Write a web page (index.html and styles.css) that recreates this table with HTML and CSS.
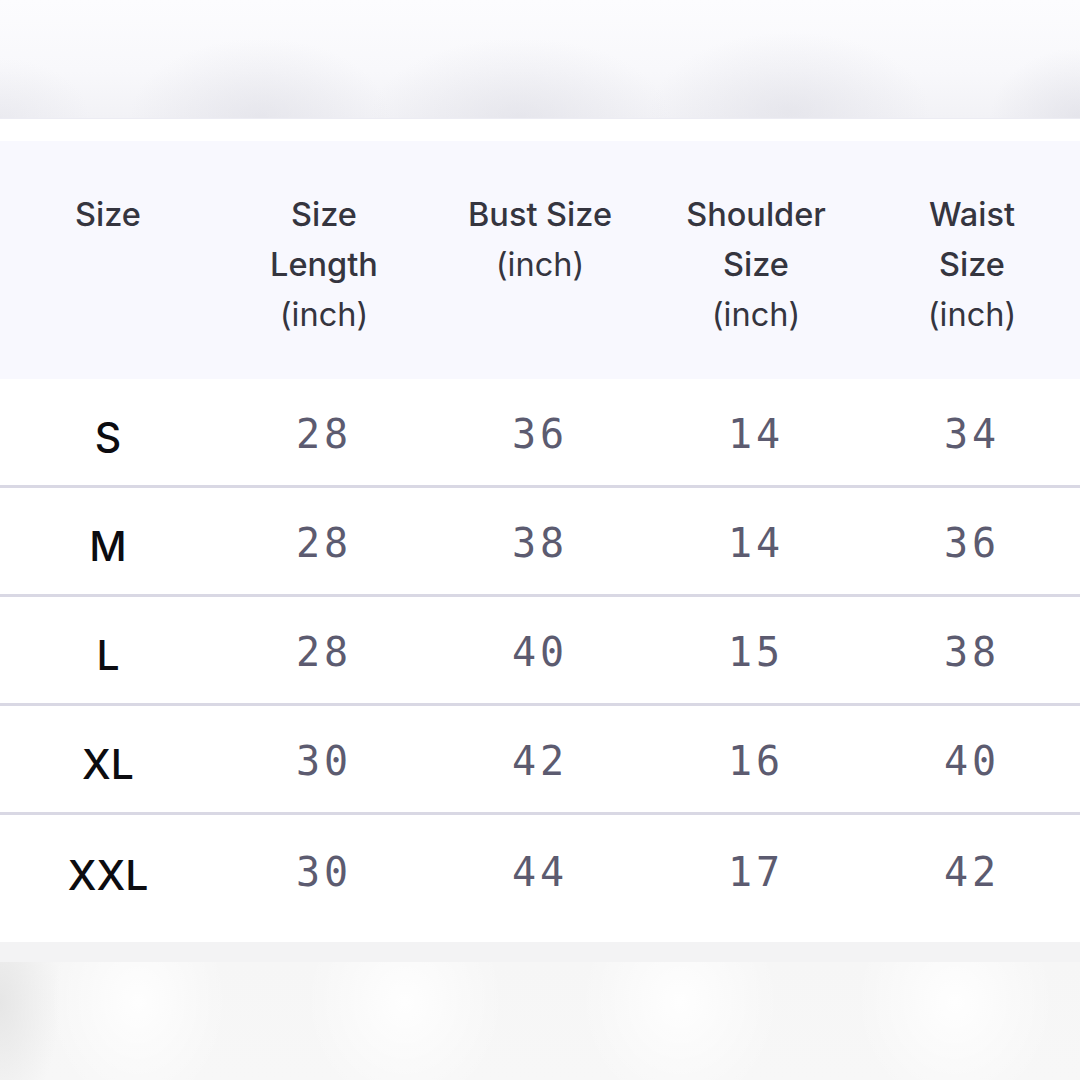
FILE: index.html
```html
<!DOCTYPE html>
<html>
<head>
<meta charset="utf-8">
<link rel="stylesheet" href="styles.css">
</head>
<body>
<div class="page">
  <div class="top-blur"></div>
  <div class="spacer"></div>
  <div class="chart">
    <div class="row head">
      <div class="cell">Size</div>
      <div class="cell">Size<br>Length<br><span class="unit">(inch)</span></div>
      <div class="cell">Bust Size<br><span class="unit">(inch)</span></div>
      <div class="cell">Shoulder<br>Size<br><span class="unit">(inch)</span></div>
      <div class="cell">Waist<br>Size<br><span class="unit">(inch)</span></div>
    </div>
    <div class="row body">
      <div class="cell size">S</div><div class="cell num">28</div><div class="cell num">36</div><div class="cell num">14</div><div class="cell num">34</div>
    </div>
    <div class="row body">
      <div class="cell size">M</div><div class="cell num">28</div><div class="cell num">38</div><div class="cell num">14</div><div class="cell num">36</div>
    </div>
    <div class="row body">
      <div class="cell size">L</div><div class="cell num">28</div><div class="cell num">40</div><div class="cell num">15</div><div class="cell num">38</div>
    </div>
    <div class="row body">
      <div class="cell size">XL</div><div class="cell num">30</div><div class="cell num">42</div><div class="cell num">16</div><div class="cell num">40</div>
    </div>
    <div class="row body last">
      <div class="cell size">XXL</div><div class="cell num">30</div><div class="cell num">44</div><div class="cell num">17</div><div class="cell num">42</div>
    </div>
  </div>
  <div class="band"></div>
  <div class="bottom-blur"></div>
</div>
</body>
</html>
```

FILE: styles.css
```css
html, body {
  margin: 0;
  padding: 0;
  background: #ffffff;
}
.page {
  width: 1080px;
  height: 1080px;
  overflow: hidden;
  display: flex;
  flex-direction: column;
}
.top-blur {
  height: 118px;
  flex: none;
  background:
    radial-gradient(ellipse 130px 80px at 260px 118px, rgba(215,215,224,0.45), rgba(215,215,224,0) 100%),
    radial-gradient(ellipse 150px 80px at 520px 118px, rgba(215,215,224,0.45), rgba(215,215,224,0) 100%),
    radial-gradient(ellipse 140px 80px at 790px 112px, rgba(215,215,224,0.45), rgba(215,215,224,0) 100%),
    radial-gradient(ellipse 90px 70px at 1080px 118px, rgba(215,215,224,0.5), rgba(215,215,224,0) 100%),
    radial-gradient(ellipse 90px 60px at 0px 118px, rgba(220,220,228,0.35), rgba(220,220,228,0) 100%),
    linear-gradient(to bottom, #fcfcfe 0%, #f8f8fb 60%, #f2f2f6 100%);
  border-bottom: 1px solid #ececf3;
}
.spacer {
  height: 22px;
  flex: none;
  background: #ffffff;
}
.chart {
  flex: none;
  display: flex;
  flex-direction: column;
}
.row {
  display: grid;
  grid-template-columns: repeat(5, 216px);
}
.head {
  background: #f8f8fe;
  height: 238px;
  box-sizing: border-box;
  padding-top: 49px;
  align-items: start;
  font-family: Inter, "Noto Sans", sans-serif;
  font-weight: 500;
  font-size: 32.5px;
  line-height: 50px;
  color: #35353f;
}
.head .unit {
  font-weight: 400;
}
.cell {
  text-align: center;
}
.body {
  height: 109px;
  box-sizing: border-box;
  border-bottom: 3px solid #d9d8e4;
  align-items: center;
  padding-top: 4px;
}
.body.last {
  height: 127px;
  border-bottom: none;
  padding-top: 0;
  padding-bottom: 14px;
}
.size {
  font-family: Inter, "Noto Sans", sans-serif;
  font-weight: 500;
  font-size: 41px;
  color: #0c0c10;
  padding-top: 6px;
}
.num {
  font-family: "DejaVu Sans Mono", monospace;
  font-size: 40px;
  letter-spacing: 4px;
  color: #5c5b70;
}
.band {
  height: 20px;
  flex: none;
  background: #f3f3f4;
}
.bottom-blur {
  flex: 1;
  background:
    radial-gradient(ellipse 60px 120px at 0px 40px, rgba(228,228,228,0.9), rgba(228,228,228,0) 100%),
    radial-gradient(ellipse 90px 110px at 138px 40px, rgba(255,255,255,0.9), rgba(255,255,255,0) 100%),
    radial-gradient(ellipse 100px 110px at 405px 40px, rgba(255,255,255,0.9), rgba(255,255,255,0) 100%),
    radial-gradient(ellipse 100px 110px at 680px 40px, rgba(255,255,255,0.9), rgba(255,255,255,0) 100%),
    radial-gradient(ellipse 100px 110px at 955px 40px, rgba(255,255,255,0.9), rgba(255,255,255,0) 100%),
    linear-gradient(to bottom, #f6f6f6, #f7f7f7);
}
```
